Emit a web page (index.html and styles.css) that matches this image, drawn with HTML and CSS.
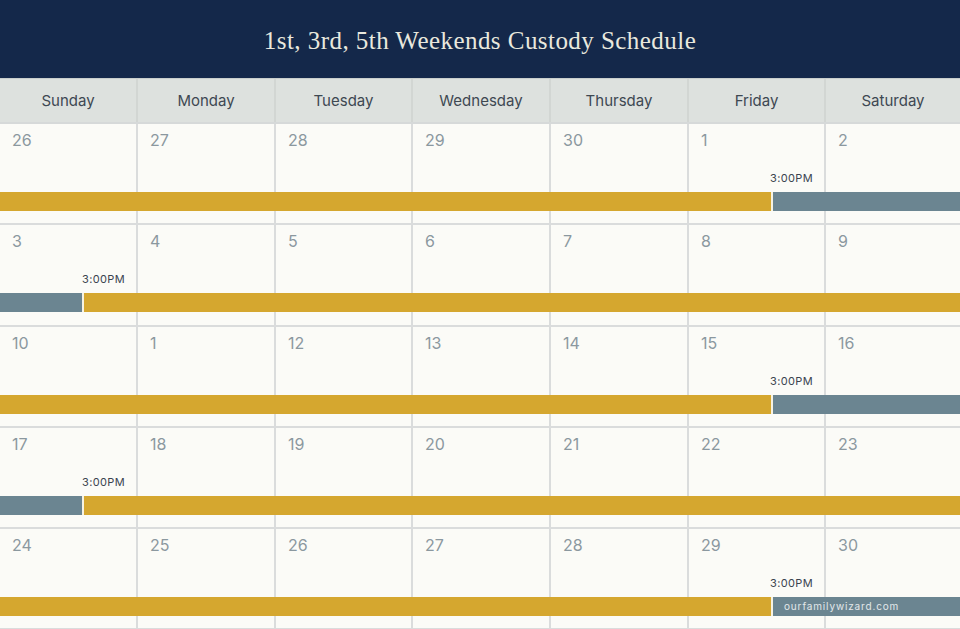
FILE: index.html
```html
<!DOCTYPE html>
<html lang="en">
<head>
<meta charset="utf-8">
<title>1st, 3rd, 5th Weekends Custody Schedule</title>
<link rel="stylesheet" href="styles.css">
</head>
<body>
<header class="title-bar"><h1 class="title">1st, 3rd, 5th Weekends Custody Schedule</h1></header>
<div class="weekdays">
  <div class="wd">Sunday</div><div class="wd">Monday</div><div class="wd">Tuesday</div><div class="wd">Wednesday</div><div class="wd">Thursday</div><div class="wd">Friday</div><div class="wd">Saturday</div>
</div>

<div class="week">
  <div class="cell"><span class="num">26</span></div>
  <div class="cell"><span class="num">27</span></div>
  <div class="cell"><span class="num">28</span></div>
  <div class="cell"><span class="num">29</span></div>
  <div class="cell"><span class="num">30</span></div>
  <div class="cell"><span class="num">1</span><span class="time">3:00PM</span></div>
  <div class="cell"><span class="num">2</span></div>
  <div class="bar"><div class="seg yellow" style="width:771px"></div><div class="seg slate"></div></div>
</div>

<div class="week">
  <div class="cell"><span class="num">3</span><span class="time">3:00PM</span></div>
  <div class="cell"><span class="num">4</span></div>
  <div class="cell"><span class="num">5</span></div>
  <div class="cell"><span class="num">6</span></div>
  <div class="cell"><span class="num">7</span></div>
  <div class="cell"><span class="num">8</span></div>
  <div class="cell"><span class="num">9</span></div>
  <div class="bar"><div class="seg slate" style="width:82px"></div><div class="seg yellow"></div></div>
</div>

<div class="week">
  <div class="cell"><span class="num">10</span></div>
  <div class="cell"><span class="num">1</span></div>
  <div class="cell"><span class="num">12</span></div>
  <div class="cell"><span class="num">13</span></div>
  <div class="cell"><span class="num">14</span></div>
  <div class="cell"><span class="num">15</span><span class="time">3:00PM</span></div>
  <div class="cell"><span class="num">16</span></div>
  <div class="bar"><div class="seg yellow" style="width:771px"></div><div class="seg slate"></div></div>
</div>

<div class="week">
  <div class="cell"><span class="num">17</span><span class="time">3:00PM</span></div>
  <div class="cell"><span class="num">18</span></div>
  <div class="cell"><span class="num">19</span></div>
  <div class="cell"><span class="num">20</span></div>
  <div class="cell"><span class="num">21</span></div>
  <div class="cell"><span class="num">22</span></div>
  <div class="cell"><span class="num">23</span></div>
  <div class="bar"><div class="seg slate" style="width:82px"></div><div class="seg yellow"></div></div>
</div>

<div class="week">
  <div class="cell"><span class="num">24</span></div>
  <div class="cell"><span class="num">25</span></div>
  <div class="cell"><span class="num">26</span></div>
  <div class="cell"><span class="num">27</span></div>
  <div class="cell"><span class="num">28</span></div>
  <div class="cell"><span class="num">29</span><span class="time">3:00PM</span></div>
  <div class="cell"><span class="num">30</span></div>
  <div class="bar"><div class="seg yellow" style="width:771px"></div><div class="seg slate"><span class="brand">ourfamilywizard.com</span></div></div>
</div>
</body>
</html>
```

FILE: styles.css
```css
* { box-sizing: border-box; }
html, body { margin: 0; padding: 0; }
body {
  width: 960px;
  height: 629px;
  overflow: hidden;
  background: #fbfbf7;
  font-family: Inter, "Noto Sans", sans-serif;
}
.title-bar {
  height: 78px;
  background: #14284a;
  display: flex;
  align-items: center;
  justify-content: center;
}
.title {
  margin: 0;
  padding-top: 3px;
  font-family: "Liberation Serif", serif;
  font-weight: 400;
  font-size: 25px;
  letter-spacing: 0.45px;
  color: #e9e8de;
}
.weekdays,
.week {
  display: grid;
  grid-template-columns: 136px 136px 135px 136px 136px 135px 1fr;
  column-gap: 2px;
}
.weekdays {
  height: 46px;
  background: #d2d6d3;
  border-top: 1px solid #c9cecc;
  border-bottom: 2px solid #d6d9d9;
}
.wd {
  background: #dde1de;
  display: flex;
  align-items: center;
  justify-content: center;
  font-size: 15px;
  color: #3e4852;
}
.week {
  grid-template-rows: 68px 19px 12.25px;
  background: #dadcdc;
  border-bottom: 2px solid #dadcdc;
}
.cell {
  grid-row: 1 / -1;
  background: #fbfbf7;
  display: flex;
  flex-direction: column;
}
.cell:nth-child(1) { grid-column: 1; }
.cell:nth-child(2) { grid-column: 2; }
.cell:nth-child(3) { grid-column: 3; }
.cell:nth-child(4) { grid-column: 4; }
.cell:nth-child(5) { grid-column: 5; }
.cell:nth-child(6) { grid-column: 6; }
.cell:nth-child(7) { grid-column: 7; }
.num {
  padding: 6px 0 0 12px;
  font-size: 16px;
  line-height: 20px;
  color: #8b989f;
}
.time {
  margin-top: auto;
  margin-bottom: 38.25px;
  padding-right: 11px;
  align-self: flex-end;
  font-size: 11px;
  line-height: 13px;
  letter-spacing: 0.35px;
  color: #3a4450;
}
.bar {
  grid-row: 2;
  grid-column: 1 / -1;
  display: flex;
}
.seg { height: 19px; }
.seg.yellow { background: #d5a72f; }
.seg.slate { background: #6b8591; }
.seg + .seg { flex: 1; border-left: 2px solid #f7f3e3; }
.brand {
  display: block;
  padding-left: 11px;
  font-size: 10px;
  line-height: 19px;
  letter-spacing: 0.85px;
  color: #e3e8ea;
}
```
